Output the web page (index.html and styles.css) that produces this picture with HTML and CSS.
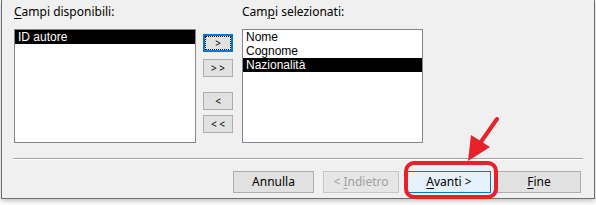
FILE: index.html
```html
<!DOCTYPE html>
<html lang="it">
<head>
    <meta charset="UTF-8">
    <title>Creazione guidata Report</title>
    <link rel="stylesheet" href="styles.css">
</head>
<body>
    <div class="dialog">
        <div class="fields">
            <div class="field-col">
                <div class="field-label"><u>C</u>ampi disponibili:</div>
                <div class="listbox">
                    <div class="item selected">ID autore</div>
                </div>
            </div>
            <div class="move-buttons">
                <button class="move focused">&gt;</button>
                <button class="move">&gt; &gt;</button>
                <button class="move move-back">&lt;</button>
                <button class="move">&lt; &lt;</button>
            </div>
            <div class="field-col right">
                <div class="field-label">Cam<u>p</u>i selezionati:</div>
                <div class="listbox">
                    <div class="item">Nome</div>
                    <div class="item">Cognome</div>
                    <div class="item selected">Nazionalità</div>
                </div>
            </div>
        </div>
        <div class="separator"></div>
        <div class="actions">
            <button class="action btn-cancel">Annulla</button>
            <button class="action btn-back" disabled>&lt; <u>I</u>ndietro</button>
            <button class="action btn-next default"><u>A</u>vanti &gt;</button>
            <button class="action btn-finish"><u>F</u>ine</button>
        </div>
    </div>

    <!-- red annotation drawn over the screenshot -->
    <svg class="callout" width="596" height="205" viewBox="0 0 596 205">
        <rect x="406" y="163" width="90" height="34" rx="8" ry="8" fill="none" stroke="#e8202a" stroke-width="4"/>
        <line x1="497" y1="119" x2="476" y2="149" stroke="#e8202a" stroke-width="4" stroke-linecap="round"/>
        <polygon points="468,161 471,135 490,147" fill="#e8202a"/>
    </svg>
</body>
</html>
```

FILE: styles.css
```css
body {
    margin: 0;
    background-color: #fff;
    font-family: "Noto Sans", "Open Sans", sans-serif;
    font-size: 12px;
    color: #000;
    position: relative;
    width: 596px;
    height: 205px;
    overflow: hidden;
}
u {
    text-decoration-thickness: 1px;
    text-underline-offset: 2px;
}
.dialog {
    margin-left: 1px;
    width: 594px;
    height: 199px;
    box-sizing: border-box;
    background-color: #f0f0f0;
    border: 1px solid #6d6d6d;
    border-top: none;
    box-shadow: 0 2px 5px rgba(0, 0, 0, 0.25);
}
.fields {
    display: flex;
    padding-left: 12px;
}
.field-col {
    width: 182px;
}
.field-col.right {
    width: 181px;
    margin-left: 9px;
}
.field-label {
    margin-top: 4px;
    height: 16px;
    line-height: 16px;
}
.listbox {
    margin-top: 9px;
    height: 114px;
    box-sizing: border-box;
    background-color: #fff;
    border: 1px solid #828790;
}
.item {
    height: 14px;
    line-height: 14px;
    padding-left: 3px;
    font-family: "Liberation Sans", Arial, sans-serif;
    font-size: 12px;
}
.item.selected {
    background-color: #000;
    color: #fff;
}
.move-buttons {
    display: flex;
    flex-direction: column;
    gap: 7px;
    margin-left: 7px;
    padding-top: 34px;
    width: 30px;
}
button {
    font-family: inherit;
    color: #000;
    background-color: #e1e1e1;
    border: 1px solid #adadad;
    padding: 0;
    margin: 0;
    box-sizing: border-box;
}
.move {
    width: 30px;
    height: 18px;
    font-size: 10px;
    line-height: 14px;
    position: relative;
}
.move-back {
    margin-top: 8px;
}
.move-buttons .move:last-child {
    margin-top: -2px;
}
.move.focused {
    border: 2px solid #0078d7;
}
.move.focused::after {
    content: "";
    position: absolute;
    inset: 0;
    border: 1px dotted #000;
}
.separator {
    margin: 15px 11px 0;
    border-top: 1px solid #a0a0a0;
    border-bottom: 1px solid #fff;
}
.actions {
    display: flex;
    justify-content: flex-end;
    margin-top: 11px;
    padding-right: 13px;
}
.action {
    height: 22px;
    font-size: 12px;
    line-height: 20px;
}
.btn-cancel {
    width: 81px;
}
.btn-back {
    width: 76px;
    margin-left: 9px;
    color: #a0a0a0;
    background-color: #e6e6e6;
    border-color: #c6c6c6;
}
.btn-next {
    width: 84px;
    margin-left: 8px;
}
.btn-next.default {
    background-color: #e5f1fb;
    border-color: #0078d7;
}
.btn-finish {
    width: 84px;
    margin-left: 6px;
}
.callout {
    position: absolute;
    top: 0;
    left: 0;
    pointer-events: none;
}
```
